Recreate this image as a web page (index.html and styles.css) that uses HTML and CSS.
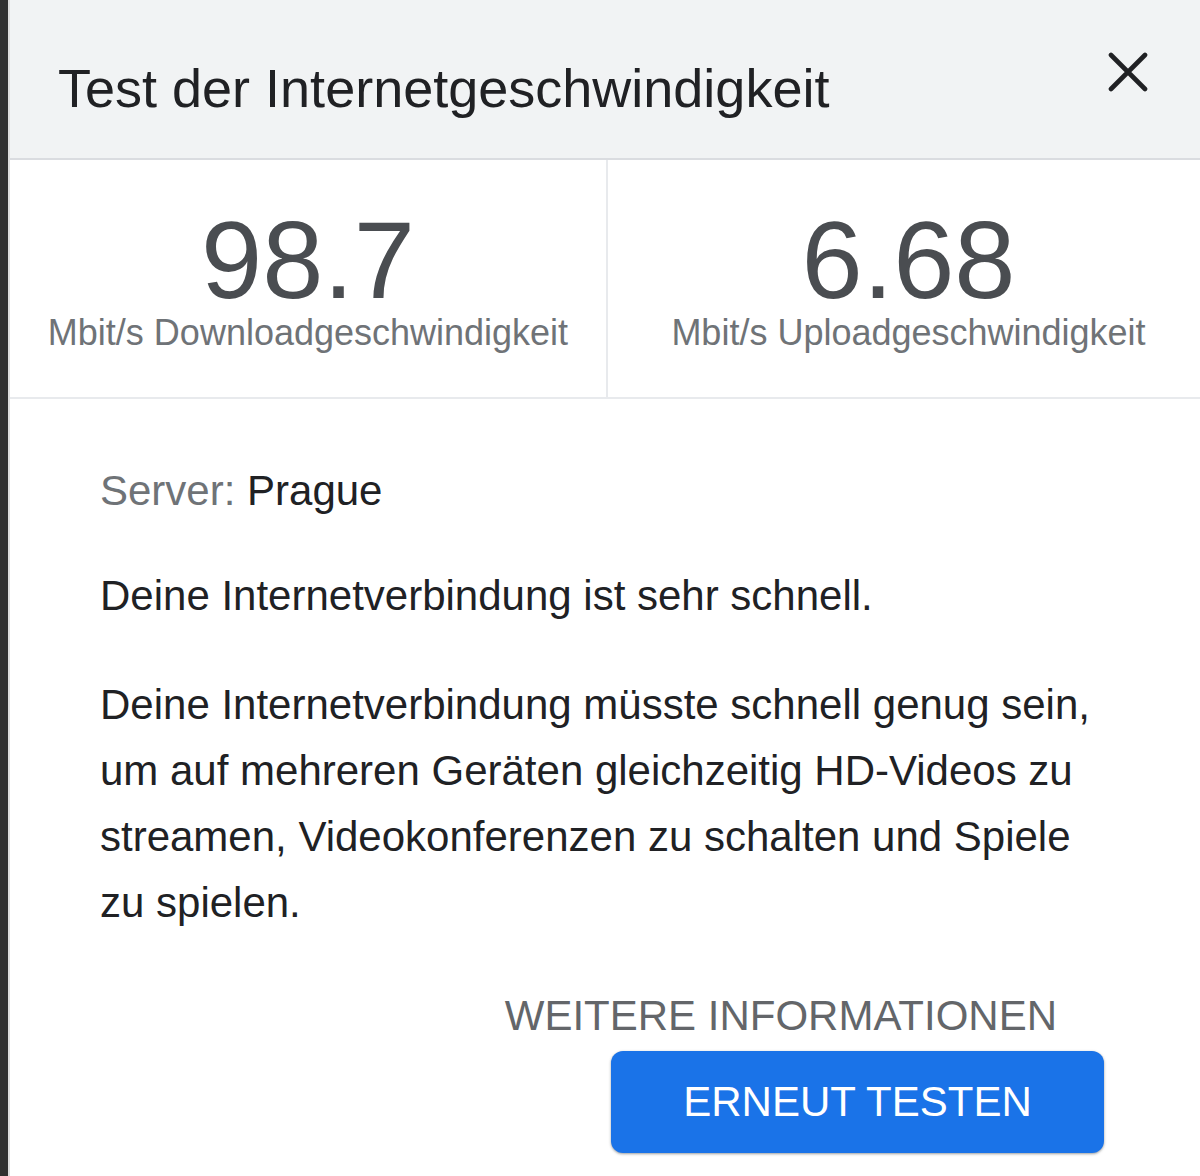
FILE: index.html
```html
<!DOCTYPE html>
<html lang="de">
<head>
<meta charset="utf-8">
<title>Test der Internetgeschwindigkeit</title>
<link rel="stylesheet" href="styles.css">
</head>
<body>
<div class="dialog">
  <header class="dlg-head">
    <h1 class="title">Test der Internetgeschwindigkeit</h1>
    <button class="close" aria-label="Schließen">
      <svg viewBox="0 0 40 40" width="40" height="40"><path d="M3 3 L37 37 M37 3 L3 37" stroke="#202124" stroke-width="4.6" stroke-linecap="round" fill="none"/></svg>
    </button>
  </header>
  <section class="stats">
    <div class="stat">
      <div class="value">98.7</div>
      <div class="unit">Mbit/s Downloadgeschwindigkeit</div>
    </div>
    <div class="stat stat-up">
      <div class="value">6.68</div>
      <div class="unit">Mbit/s Uploadgeschwindigkeit</div>
    </div>
  </section>
  <section class="content">
    <p class="server"><span class="server-label">Server:</span> Prague</p>
    <p class="verdict">Deine Internetverbindung ist sehr schnell.</p>
    <p class="desc">Deine Internetverbindung müsste schnell genug sein, um auf mehreren Geräten gleichzeitig HD-Videos zu streamen, Videokonferenzen zu schalten und Spiele zu spielen.</p>
    <div class="actions">
      <a class="more" href="#">WEITERE INFORMATIONEN</a>
      <button class="retest">ERNEUT TESTEN</button>
    </div>
  </section>
</div>
</body>
</html>
```
FILE: styles.css
```css
html, body {
  margin: 0;
  padding: 0;
}
body {
  background: #2f2f2f;
  font-family: "Liberation Sans", Arial, Helvetica, sans-serif;
  height: 1176px;
  overflow: hidden;
}
.dialog {
  margin-left: 8px;
  border-left: 2px solid #dcdcdc;
  background: #ffffff;
  min-height: 1176px;
}
.dlg-head {
  height: 160px;
  box-sizing: border-box;
  background: #f1f3f4;
  border-bottom: 2px solid #dadce0;
  display: flex;
  justify-content: space-between;
  align-items: flex-start;
  padding: 0 52px 0 48px;
}
.title {
  margin: 56px 0 0;
  font-size: 54px;
  line-height: 64px;
  font-weight: 400;
  color: #202124;
}
.close {
  margin-top: 52px;
  width: 40px;
  height: 40px;
  padding: 0;
  border: 0;
  background: transparent;
  display: flex;
}
.stats {
  display: grid;
  grid-template-columns: 598px 1fr;
  border-bottom: 2px solid #e8eaed;
}
.stat {
  display: flex;
  flex-direction: column;
  align-items: center;
  padding: 45px 0 46px;
}
.stat:first-child {
  border-right: 2px solid #e8eaed;
}
.stat-up {
  padding-left: 9px;
}
.value {
  font-size: 110px;
  line-height: 110px;
  color: #4a4d51;
}
.unit {
  font-size: 36px;
  line-height: 36px;
  color: #6f7377;
}
.content {
  padding: 59px 96px 0 90px;
  font-size: 42px;
  line-height: 66px;
  color: #202124;
}
.content p {
  margin: 0;
}
.server-label {
  color: #6f7377;
}
.verdict {
  padding-top: 39px;
}
.desc {
  padding-top: 43px;
}
.actions {
  display: flex;
  flex-direction: column;
  align-items: flex-end;
  padding-top: 55px;
}
.more {
  font-size: 42px;
  line-height: 50px;
  color: #63666a;
  text-decoration: none;
  margin-right: 47px;
}
.retest {
  margin-top: 10px;
  width: 493px;
  height: 102px;
  border: 0;
  border-radius: 12px;
  background: #1a73e8;
  color: #ffffff;
  font-family: "Liberation Sans", Arial, Helvetica, sans-serif;
  font-size: 42px;
  line-height: 50px;
  box-shadow: 0 1px 3px rgba(60, 64, 67, 0.35), 0 1px 2px rgba(60, 64, 67, 0.2);
  display: flex;
  align-items: center;
  justify-content: center;
  padding: 0;
}
```
